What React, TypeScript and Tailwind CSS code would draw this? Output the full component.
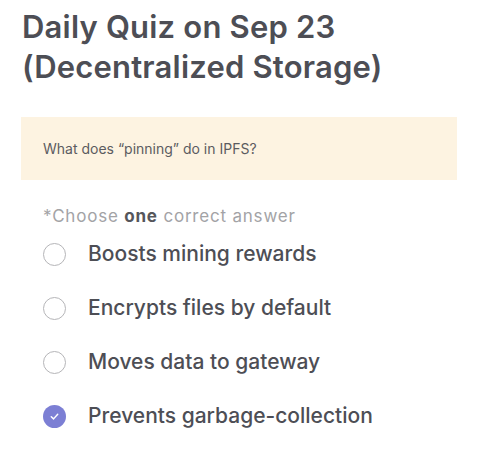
const options = [
  { label: "Boosts mining rewards", checked: false },
  { label: "Encrypts files by default", checked: false },
  { label: "Moves data to gateway", checked: false },
  { label: "Prevents garbage-collection", checked: true },
];

const Radio = ({ checked }: { checked: boolean }) => {
  if (checked) {
    return (
      <div className="w-[23px] h-[23px] rounded-full bg-[#7c7fd4] flex items-center justify-center shrink-0">
        <svg width="11" height="11" viewBox="0 0 12 12" fill="none">
          <path d="M2.5 6.3 L5 8.6 L9.5 3.6" stroke="white" strokeWidth="1.6" strokeLinecap="round" strokeLinejoin="round" />
        </svg>
      </div>
    );
  }
  return <div className="w-[23px] h-[23px] rounded-full border-[1.5px] border-[#b5b5b8] bg-white shrink-0"></div>;
};

export default function App() {
  return (
    <div className="w-[478px] h-[458px] bg-white font-['Inter',sans-serif] text-[#4d4e55] overflow-hidden">
      <h1 className="px-[22px] pt-[7px] text-[31px] leading-[40px] font-semibold tracking-[0.2px]">
        Daily Quiz on Sep 23
        <br />
        (Decentralized Storage)
      </h1>

      <div className="mx-[21px] mt-[30px] h-[63px] bg-[#fdf3e1] flex items-center px-[22px]">
        <p className="text-[14px] text-[#5b5b60]">What does “pinning” do in IPFS?</p>
      </div>

      <p className="px-[43px] mt-[25px] text-[17px] leading-[22px] tracking-[0.8px] text-[#a3a3a6]">
        *Choose <span className="font-bold text-[#55565b]">one</span> correct answer
      </p>

      <div className="px-[43px] flex flex-col">
        {options.map((o) => (
          <div key={o.label} className="h-[54px] flex items-center gap-[22px]">
            <Radio checked={o.checked} />
            <span className="text-[21px] font-medium">{o.label}</span>
          </div>
        ))}
      </div>
    </div>
  );
}
